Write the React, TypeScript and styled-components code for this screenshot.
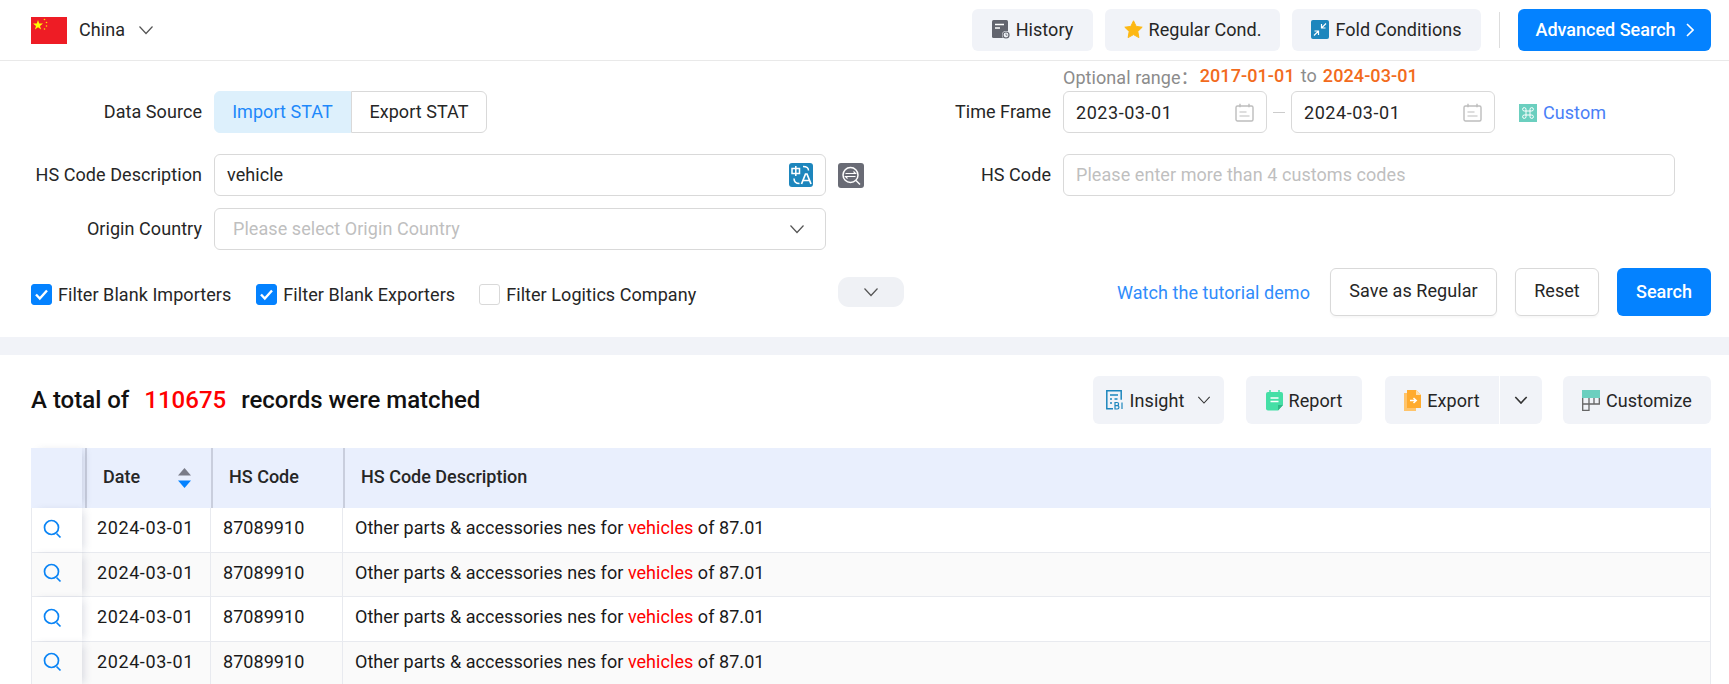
import React from 'react';
import styled, { createGlobalStyle } from 'styled-components';

const GlobalStyle = createGlobalStyle`
  html, body {
    margin: 0;
    padding: 0;
    background: #FFFFFF;
    height: 684px;
    overflow: hidden;
  }
  * {
    box-sizing: border-box;
  }
  body {
    font-family: Roboto, "Noto Sans CJK SC", "Liberation Sans", sans-serif;
    color: #262626;
    font-size: 18px;
    letter-spacing: 0.06px;
  }
`;

const Page = styled.div`
  width: 1729px;
  height: 684px;
  overflow: hidden;
  background: #FFFFFF;
`;

const TopBar = styled.div`
  display: flex;
  align-items: center;
  height: 61px;
  padding: 0 18px 0 31px;
  border-bottom: 1px solid #E9E9E9;
`;

const CountryName = styled.span`
  margin-left: 12px;
  margin-right: 13px;
  padding-bottom: 1px;
`;

const TopActions = styled.div`
  display: flex;
  align-items: center;
  gap: 12px;
  margin-left: auto;
`;

const GreyButton = styled.div<{ $width: number }>`
  display: flex;
  align-items: center;
  justify-content: center;
  gap: 6px;
  width: ${(props) => props.$width}px;
  height: 42px;
  padding-bottom: 1px;
  border-radius: 6px;
  background: #F1F3F8;
`;

const TopDivider = styled.div`
  width: 1px;
  height: 36px;
  margin: 0 6px 0 6px;
  background: #DDDDDD;
`;

const BlueButton = styled.div<{ $width: number; $height: number }>`
  display: flex;
  align-items: center;
  justify-content: center;
  gap: 10px;
  width: ${(props) => props.$width}px;
  height: ${(props) => props.$height}px;
  padding-bottom: 1px;
  border-radius: 6px;
  background: #0482FF;
  color: #FFFFFF;
  font-weight: 500;
  letter-spacing: 0;
`;

const FormGrid = styled.div`
  display: flex;
  padding-left: 31px;
`;

const LeftColumn = styled.div`
  width: 880px;
  padding-top: 30px;
`;

const RightColumn = styled.div`
  flex: 1;
`;

const RangeHint = styled.div`
  display: flex;
  align-items: center;
  height: 30px;
  padding-left: 152px;
  padding-bottom: 1px;
  color: #8C8C8C;
`;

const RangeDate = styled.b`
  color: #F26B1D;
  font-weight: 500;
  letter-spacing: 0.1px;
  margin: 0 6px;
  &:first-of-type {
    margin-left: 1px;
  }
`;

const Field = styled.div<{ $top?: number }>`
  display: flex;
  align-items: center;
  height: 42px;
  margin-top: ${(props) => props.$top || 0}px;
`;

const FieldLabel = styled.div<{ $width: number }>`
  flex: none;
  width: ${(props) => props.$width}px;
  margin-right: 12px;
  padding-bottom: 2px;
  text-align: right;
  white-space: nowrap;
`;

const SegmentGroup = styled.div`
  display: flex;
  height: 42px;
`;

const Segment = styled.div<{ $active?: boolean }>`
  display: flex;
  align-items: center;
  justify-content: center;
  padding-bottom: 2px;
  width: ${(props) => (props.$active ? 137 : 136)}px;
  background: ${(props) => (props.$active ? '#DDF0FC' : '#FFFFFF')};
  color: ${(props) => (props.$active ? '#1E88FA' : '#262626')};
  border: 1px solid ${(props) => (props.$active ? '#DDF0FC' : '#D9D9D9')};
  border-radius: ${(props) => (props.$active ? '6px 0 0 6px' : '0 6px 6px 0')};
`;

const InputBox = styled.div<{ $width: number }>`
  display: flex;
  align-items: center;
  justify-content: space-between;
  flex: none;
  width: ${(props) => props.$width}px;
  height: 42px;
  padding: 0 12px;
  border: 1px solid #D9D9D9;
  border-radius: 6px;
  background: #FFFFFF;
`;

const InputText = styled.span`
  padding-bottom: 2px;
`;

const DateValue = styled.span`
  letter-spacing: 0.55px;
`;

const Placeholder = styled.span<{ $indent?: number }>`
  padding-bottom: 2px;
  color: #BFBFBF;
  margin-left: ${(props) => props.$indent || 0}px;
`;

const SelectArrow = styled.span`
  display: flex;
  margin-right: 8px;
`;

const CompareSlot = styled.div`
  display: flex;
  margin-left: 12px;
`;

const DateDash = styled.div`
  width: 12px;
  height: 1px;
  margin: 0 6px;
  background: #CCCCCC;
`;

const CustomLink = styled.div`
  display: flex;
  align-items: center;
  gap: 6px;
  margin-left: 24px;
  padding-top: 1px;
  color: #4A7FF7;
`;

const ActionRow = styled.div`
  display: flex;
  align-items: center;
  height: 48px;
  margin-top: 18px;
  padding: 0 18px 0 31px;
`;

const CheckGroup = styled.div`
  display: flex;
  align-items: center;
  flex: none;
  width: 807px;
  padding-top: 5px;
`;

const CheckItem = styled.div<{ $gap: number }>`
  display: flex;
  align-items: center;
  gap: 6px;
  margin-right: ${(props) => props.$gap}px;
  white-space: nowrap;
`;

const CheckBox = styled.div<{ $checked?: boolean }>`
  display: flex;
  align-items: center;
  justify-content: center;
  width: 21px;
  height: 21px;
  border-radius: 3px;
  background: ${(props) => (props.$checked ? '#0482FF' : '#FFFFFF')};
  border: 1px solid ${(props) => (props.$checked ? '#0482FF' : '#D9D9D9')};
`;

const FoldToggle = styled.div`
  display: flex;
  align-items: center;
  justify-content: center;
  width: 66px;
  height: 30px;
  border-radius: 11px;
  background: #EFF1F5;
`;

const FormActions = styled.div`
  display: flex;
  align-items: center;
  margin-left: auto;
`;

const TutorialLink = styled.span`
  margin-right: 20px;
  color: #2F8CFB;
`;

const OutlineButton = styled.div<{ $width: number }>`
  display: flex;
  align-items: center;
  justify-content: center;
  width: ${(props) => props.$width}px;
  height: 48px;
  margin-right: 18px;
  padding-bottom: 3px;
  border: 1px solid #D9D9D9;
  border-radius: 6px;
  background: #FFFFFF;
  box-shadow: 0 2px 2px rgba(0, 0, 0, 0.03);
`;

const Band = styled.div`
  height: 18px;
  margin-top: 21px;
  background: #F1F3F8;
`;

const Results = styled.div`
  padding: 21px 18px 0 31px;
`;

const ResultsBar = styled.div`
  display: flex;
  align-items: center;
  justify-content: space-between;
  height: 48px;
  margin-bottom: 24px;
`;

const TotalText = styled.div`
  font-size: 24px;
  font-weight: 500;
  letter-spacing: 0;
  color: #111111;
  em {
    font-style: normal;
    color: #FF0000;
    margin: 0 15px;
  }
`;

const ResultActions = styled.div`
  display: flex;
  align-items: center;
  gap: 22px;
`;

const ToolButton = styled.div<{ $width: number }>`
  display: flex;
  align-items: center;
  justify-content: center;
  gap: 6px;
  width: ${(props) => props.$width}px;
  height: 48px;
  border-radius: 6px;
  background: #F1F3F8;
`;

const InsightArrow = styled.span`
  display: flex;
  margin-left: 7px;
`;

const ExportSplit = styled.div`
  display: flex;
  height: 48px;
  margin: 0 -1px 0 1px;
  border-radius: 6px;
  overflow: hidden;
  background: #F1F3F8;
`;

const ExportMain = styled.div`
  display: flex;
  align-items: center;
  justify-content: center;
  gap: 6px;
  width: 115px;
  border-right: 1px solid #FFFFFF;
`;

const ExportArrow = styled.div`
  display: flex;
  align-items: center;
  justify-content: center;
  width: 42px;
`;

const Table = styled.table`
  width: 100%;
  border-collapse: separate;
  border-spacing: 0;
  table-layout: fixed;
`;

const HeadCell = styled.th<{ $left: number; $divider?: boolean }>`
  position: relative;
  height: 60px;
  padding: 0 0 3px ${(props) => props.$left}px;
  background: #E9EFFD;
  border-left: ${(props) => (props.$divider ? '2px solid #C9CEDD' : 'none')};
  text-align: left;
  font-weight: 500;
  letter-spacing: 0;
`;

const Corner = styled.th`
  position: relative;
  z-index: 1;
  padding: 0;
  background: #E9EFFD;
  box-shadow: 5px 0 8px -3px rgba(60, 70, 110, 0.18);
`;

const DateHeadLine = styled.span`
  position: absolute;
  left: 3px;
  top: 0;
  bottom: 0;
  width: 2px;
  background: #C9CEDD;
`;

const SortMark = styled.span`
  position: absolute;
  right: 20px;
  top: 20px;
  display: flex;
`;

const BodyCell = styled.td<{ $left: number; $zebra?: boolean; $spaced?: boolean }>`
  height: 44.5px;
  padding: 0 0 4px ${(props) => props.$left}px;
  background: ${(props) => (props.$zebra ? '#FAFAFA' : '#FFFFFF')};
  border-bottom: 1px solid #E8EAEF;
  border-right: 1px solid #E8EAEF;
  color: #1A1A1A;
  white-space: nowrap;
  letter-spacing: ${(props) => (props.$spaced ? '0.6px' : '0.05px')};
  mark {
    background: none;
    color: #FF0000;
  }
`;

const PinCell = styled.td<{ $zebra?: boolean }>`
  position: relative;
  z-index: 1;
  height: 44.5px;
  padding: 2px 0 0 11px;
  background: ${(props) => (props.$zebra ? '#FAFAFA' : '#FFFFFF')};
  border-left: 1px solid #E8EAEF;
  border-bottom: 1px solid #E8EAEF;
  box-shadow: 5px 0 8px -3px rgba(60, 70, 110, 0.18);
`;

const Chevron = ({ size = 16, color = '#555555', sw = 1.2 }: { size?: number; color?: string; sw?: number }) => (
  <svg width={size} height={size} viewBox="0 0 16 16" fill="none">
    <path d="M1.5 4.5 8 11.5l6.5-7" stroke={color} strokeWidth={sw} />
  </svg>
);

const ChevronRight = () => (
  <svg width="8" height="14" viewBox="0 0 8 14" fill="none">
    <path d="M1 1l6 6-6 6" stroke="#FFFFFF" strokeWidth="1.600" />
  </svg>
);

const Flag = () => (
  <svg width="36" height="27" viewBox="0 0 36 27">
    <rect width="36" height="27" fill="#EE1C25" />
    <polygon points="7,3 8.2,6.6 12,6.6 9,8.9 10.1,12.5 7,10.3 3.9,12.5 5,8.9 2,6.6 5.8,6.6" fill="#FFFF00" />
    <circle cx="13.500" cy="2.500" r=".8" fill="#FFDE00" />
    <circle cx="15.500" cy="5.500" r=".8" fill="#FFDE00" />
    <circle cx="15.500" cy="9" r=".8" fill="#FFDE00" />
    <circle cx="13.500" cy="12" r=".8" fill="#FFDE00" />
  </svg>
);

const HistoryIcon = () => (
  <svg width="18" height="19" viewBox="0 0 18 19">
    <rect x="0" y="0" width="16" height="18" rx="1.500" fill="#62646E" />
    <path d="M3 4.500h9M3 8h5" stroke="#FFFFFF" strokeWidth="1.300" />
    <circle cx="14" cy="15" r="4" fill="#F1F3F8" />
    <circle cx="14" cy="15" r="3" fill="none" stroke="#62646E" strokeWidth="1.200" />
    <path d="M14 13.500v1.700h1.400" stroke="#62646E" strokeWidth="0.800" fill="none" />
  </svg>
);

const StarIcon = () => (
  <svg width="19" height="19" viewBox="0 0 19 19">
    <path d="M9.500.8l2.700 5.600 6 .8-4.400 4.200 1.100 6.200-5.400-3-5.400 3 1.100-6.200L.8 7.200l6-.8z" fill="#FDB813" stroke="#FDB813" strokeLinejoin="round" />
  </svg>
);

const FoldIcon = () => (
  <svg width="18" height="19" viewBox="0 0 18 19">
    <rect width="18" height="19" rx="2" fill="#1D86BD" />
    <path d="M15 3.500l-4.300 4.300M10.500 4v4h4M3 15.500l4.300-4.300M7.500 15v-4h-4" stroke="#FFFFFF" strokeWidth="1.200" fill="none" />
  </svg>
);

const TranslateIcon = () => (
  <svg width="24" height="24" viewBox="0 0 24 24">
    <rect width="24" height="24" rx="3" fill="#1D86BD" />
    <path d="M3 5.500h7.500v5H3zM6.800 3v10" stroke="#FFFFFF" strokeWidth="1.500" fill="none" />
    <path d="M14 3.500c3 0 5.500 1 5.500 4M10.500 20.500c-3 0-5.500-1-5.500-5" stroke="#FFFFFF" strokeWidth="1.500" fill="none" />
    <path d="M12.500 21l4-10h1.500l4 10M14 17.500h6" stroke="#FFFFFF" strokeWidth="1.700" fill="none" />
  </svg>
);

const CompareIcon = () => (
  <svg width="26" height="25" viewBox="0 0 26 25">
    <rect width="26" height="25" rx="3" fill="#696B75" />
    <circle cx="12.500" cy="12" r="7.500" fill="none" stroke="#FFFFFF" strokeWidth="1.500" />
    <path d="M18 17.500l4 4" stroke="#FFFFFF" strokeWidth="1.500" />
    <path d="M7.500 10.500h10l-2-2M17.500 13.500h-10l2 2" stroke="#FFFFFF" strokeWidth="1.100" fill="none" />
  </svg>
);

const CalendarIcon = () => (
  <svg width="19" height="19" viewBox="0 0 19 19" fill="none">
    <rect x="1" y="3" width="17" height="15" rx="1.500" stroke="#BDBDBD" strokeWidth="1.400" />
    <path d="M5 .8v3.500M14 .8v3.500" stroke="#BDBDBD" strokeWidth="1.400" />
    <path d="M4.500 9h7M4.500 13h10" stroke="#BDBDBD" strokeWidth="1.200" />
  </svg>
);

const CustomIcon = () => (
  <svg width="18" height="18" viewBox="0 0 18 18" fill="none">
    <rect width="18" height="18" fill="#6BCFBF" />
    <path d="M7 7h4v4H7zM7 7H5.300a1.700 1.700 0 1 1 1.700-1.700zM11 7V5.300A1.700 1.700 0 1 1 12.700 7zM7 11v1.700A1.700 1.700 0 1 1 5.300 11zM11 11h1.700a1.700 1.700 0 1 1-1.700 1.700z" stroke="#FFFFFF" strokeWidth="1" />
  </svg>
);

const CheckMark = () => (
  <svg width="15" height="13" viewBox="0 0 15 13" fill="none">
    <path d="M2 6.500l3.800 4L13 2.500" stroke="#FFFFFF" strokeWidth="2.400" />
  </svg>
);

const InsightIcon = () => (
  <svg width="18" height="20" viewBox="0 0 18 20" fill="none">
    <path d="M7 18.800H.8V.8h14.400v9" stroke="#1D86BD" strokeWidth="1.500" />
    <path d="M4 5h8M4 9h2M4 13h2M8.500 9h3" stroke="#1D86BD" strokeWidth="1.500" />
    <path d="M9 12.500h2a1.600 1.600 0 0 1 0 3.200H9h2.300a1.600 1.600 0 0 1 0 3.300H9zM16 12.500V19" stroke="#1D86BD" strokeWidth="1.200" />
  </svg>
);

const ReportIcon = () => (
  <svg width="17" height="21" viewBox="0 0 17 21">
    <path d="M2 2h13a2 2 0 0 1 2 2v11l-5 5.500H2a2 2 0 0 1-2-2V4a2 2 0 0 1 2-2z" fill="#45DFA6" />
    <path d="M12 20.500v-5.500h5z" fill="#2FB886" />
    <path d="M4 0v4M13 0v4" stroke="#45DFA6" strokeWidth="1.500" />
    <path d="M4.500 8h8M4.500 11.500h8" stroke="#FFFFFF" strokeWidth="1.500" />
  </svg>
);

const ExportIcon = () => (
  <svg width="17" height="21" viewBox="0 0 17 21">
    <path d="M0 3h3v15h9v3H0z" fill="#FFC46B" />
    <path d="M3 0h9l5 5v13H3z" fill="#FFAB2E" />
    <path d="M12 0v5h5z" fill="#FFE0AE" />
    <path d="M6 10.500h6M9.500 8l2.700 2.500L9.500 13" stroke="#FFFFFF" strokeWidth="1.500" fill="none" />
  </svg>
);

const CustomizeIcon = () => (
  <svg width="18" height="21" viewBox="0 0 18 21" fill="none">
    <rect width="18" height="8" fill="#6BCFBF" />
    <path d="M.7 8v12.300h6.300V8M.7 14h16.600V8M7 8v6M12 8v6" stroke="#666666" strokeWidth="1.300" />
  </svg>
);

const SortIcon = () => (
  <svg width="13" height="20" viewBox="0 0 13 20">
    <polygon points="6.500,0 13,7.500 0,7.500" fill="#7A7C88" />
    <polygon points="0,12.500 13,12.500 6.500,20" fill="#0482FF" />
  </svg>
);

const SearchIcon = () => (
  <svg width="19" height="20" viewBox="0 0 19 20" fill="none">
    <circle cx="8.500" cy="8.500" r="7" stroke="#0A84F5" strokeWidth="1.700" />
    <path d="M13.500 14.500l4 4" stroke="#0A84F5" strokeWidth="1.700" />
  </svg>
);

const rows = [0, 1, 2, 3];

export default function App() {
  return (
    <Page>
      <GlobalStyle />
      <TopBar>
        <Flag />
        <CountryName>China</CountryName>
        <Chevron />
        <TopActions>
          <GreyButton $width={121}><HistoryIcon />History</GreyButton>
          <GreyButton $width={175}><StarIcon />Regular Cond.</GreyButton>
          <GreyButton $width={189}><FoldIcon />Fold Conditions</GreyButton>
          <TopDivider />
          <BlueButton $width={193} $height={42}>Advanced Search<ChevronRight /></BlueButton>
        </TopActions>
      </TopBar>

      <FormGrid>
        <LeftColumn>
          <Field>
            <FieldLabel $width={171}>Data Source</FieldLabel>
            <SegmentGroup>
              <Segment $active>Import STAT</Segment>
              <Segment>Export STAT</Segment>
            </SegmentGroup>
          </Field>
          <Field $top={21}>
            <FieldLabel $width={171}>HS Code Description</FieldLabel>
            <InputBox $width={612}><InputText>vehicle</InputText><TranslateIcon /></InputBox>
            <CompareSlot><CompareIcon /></CompareSlot>
          </Field>
          <Field $top={12}>
            <FieldLabel $width={171}>Origin Country</FieldLabel>
            <InputBox $width={612}>
              <Placeholder $indent={6}>Please select Origin Country</Placeholder>
              <SelectArrow><Chevron /></SelectArrow>
            </InputBox>
          </Field>
        </LeftColumn>
        <RightColumn>
          <RangeHint>
            Optional range：<RangeDate>2017-01-01</RangeDate>to<RangeDate>2024-03-01</RangeDate>
          </RangeHint>
          <Field>
            <FieldLabel $width={140}>Time Frame</FieldLabel>
            <InputBox $width={204}><DateValue>2023-03-01</DateValue><CalendarIcon /></InputBox>
            <DateDash />
            <InputBox $width={204}><DateValue>2024-03-01</DateValue><CalendarIcon /></InputBox>
            <CustomLink><CustomIcon />Custom</CustomLink>
          </Field>
          <Field $top={21}>
            <FieldLabel $width={140}>HS Code</FieldLabel>
            <InputBox $width={612}><Placeholder>Please enter more than 4 customs codes</Placeholder></InputBox>
          </Field>
        </RightColumn>
      </FormGrid>

      <ActionRow>
        <CheckGroup>
          <CheckItem $gap={25}><CheckBox $checked><CheckMark /></CheckBox>Filter Blank Importers</CheckItem>
          <CheckItem $gap={24}><CheckBox $checked><CheckMark /></CheckBox>Filter Blank Exporters</CheckItem>
          <CheckItem $gap={0}><CheckBox />Filter Logitics Company</CheckItem>
        </CheckGroup>
        <FoldToggle><Chevron /></FoldToggle>
        <FormActions>
          <TutorialLink>Watch the tutorial demo</TutorialLink>
          <OutlineButton $width={167}>Save as Regular</OutlineButton>
          <OutlineButton $width={84}>Reset</OutlineButton>
          <BlueButton $width={94} $height={48}>Search</BlueButton>
        </FormActions>
      </ActionRow>

      <Band />

      <Results>
        <ResultsBar>
          <TotalText>A total of<em>110675</em>records were matched</TotalText>
          <ResultActions>
            <ToolButton $width={131}><InsightIcon />Insight<InsightArrow><Chevron size={14} color="#333333" /></InsightArrow></ToolButton>
            <ToolButton $width={116}><ReportIcon />Report</ToolButton>
            <ExportSplit>
              <ExportMain><ExportIcon />Export</ExportMain>
              <ExportArrow><Chevron size={14} color="#333333" sw={1.800} /></ExportArrow>
            </ExportSplit>
            <ToolButton $width={148}><CustomizeIcon />Customize</ToolButton>
          </ResultActions>
        </ResultsBar>

        <Table>
          <colgroup>
            <col width="51" />
            <col width="129" />
            <col width="132" />
            <col />
          </colgroup>
          <thead>
            <tr>
              <Corner />
              <HeadCell $left={21}><DateHeadLine />Date<SortMark><SortIcon /></SortMark></HeadCell>
              <HeadCell $left={16} $divider>HS Code</HeadCell>
              <HeadCell $left={16} $divider>HS Code Description</HeadCell>
            </tr>
          </thead>
          <tbody>
            {rows.map((row) => (
              <tr key={row}>
                <PinCell $zebra={row % 2 === 1}><SearchIcon /></PinCell>
                <BodyCell $left={15} $spaced $zebra={row % 2 === 1}>2024-03-01</BodyCell>
                <BodyCell $left={12} $zebra={row % 2 === 1}>87089910</BodyCell>
                <BodyCell $left={12} $zebra={row % 2 === 1}>
                  Other parts &amp; accessories nes for <mark>vehicles</mark> of 87.01
                </BodyCell>
              </tr>
            ))}
          </tbody>
        </Table>
      </Results>
    </Page>
  );
}
